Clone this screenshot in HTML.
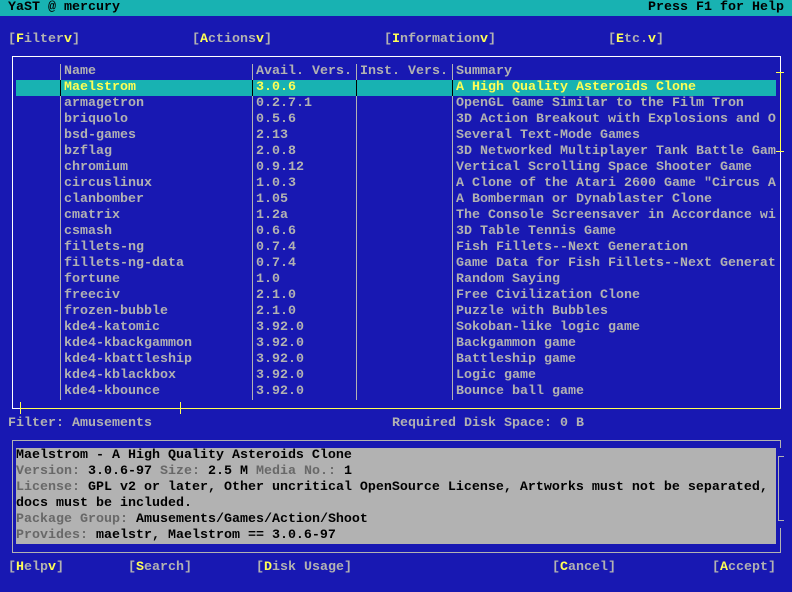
<!DOCTYPE html>
<html><head><meta charset="utf-8"><style>
*{margin:0;padding:0;box-sizing:border-box}
body{width:792px;height:592px;background:#1818b2;position:relative;overflow:hidden;font-family:"Liberation Mono",monospace;font-size:13.33px;line-height:16px;font-weight:bold;color:#b2b2b2}
.t{position:absolute;white-space:pre;height:16px}
.y{color:#ffff54}.k{color:#000}.d{color:#686868}
.l{position:absolute}
</style></head><body>
<div class="l" style="left:0;top:0;width:792px;height:16px;background:#18b2b2"></div>
<div class="t k" style="left:8px;top:0">YaST @ mercury</div>
<div class="t k" style="left:648px;top:0">Press F1 for Help</div>

<div class="t" style="left:8px;top:32px">[<span class="y">F</span>ilter<span class="y">v</span>]</div>
<div class="t" style="left:192px;top:32px">[<span class="y">A</span>ctions<span class="y">v</span>]</div>
<div class="t" style="left:384px;top:32px">[<span class="y">I</span>nformation<span class="y">v</span>]</div>
<div class="t" style="left:608px;top:32px">[<span class="y">E</span>tc.<span class="y">v</span>]</div>

<!-- list box -->
<div class="l" style="left:12px;top:56px;width:769px;height:1px;background:#fff"></div>
<div class="l" style="left:12px;top:56px;width:1px;height:353px;background:#fff"></div>
<div class="l" style="left:780px;top:56px;width:1px;height:16px;background:#fff"></div>
<div class="l" style="left:780px;top:152px;width:1px;height:257px;background:#fff"></div>
<div class="l" style="left:12px;top:408px;width:8px;height:1px;background:#fff"></div>
<div class="l" style="left:20px;top:408px;width:761px;height:1px;background:#ffff54"></div>
<div class="l" style="left:20px;top:402px;width:1px;height:12px;background:#ffff54"></div>
<div class="l" style="left:180px;top:402px;width:1px;height:12px;background:#ffff54"></div>
<div class="l" style="left:780px;top:72px;width:1px;height:80px;background:#ffff54"></div>
<div class="l" style="left:776px;top:72px;width:8px;height:1px;background:#ffff54"></div>
<div class="l" style="left:776px;top:151px;width:8px;height:1px;background:#ffff54"></div>

<div class="l" style="left:16px;top:80px;width:760px;height:16px;background:#18b2b2"></div>
<div class="l" style="left:60px;top:64px;width:1px;height:336px;background:#b2b2b2"></div>
<div class="l" style="left:252px;top:64px;width:1px;height:336px;background:#b2b2b2"></div>
<div class="l" style="left:356px;top:64px;width:1px;height:336px;background:#b2b2b2"></div>
<div class="l" style="left:452px;top:64px;width:1px;height:336px;background:#b2b2b2"></div>
<div class="l" style="left:60px;top:80px;width:1px;height:16px;background:#000"></div>
<div class="l" style="left:252px;top:80px;width:1px;height:16px;background:#000"></div>
<div class="l" style="left:356px;top:80px;width:1px;height:16px;background:#000"></div>
<div class="l" style="left:452px;top:80px;width:1px;height:16px;background:#000"></div>

<div class="t" style="left:64px;top:64px">Name</div>
<div class="t" style="left:256px;top:64px">Avail. Vers.</div>
<div class="t" style="left:360px;top:64px">Inst. Vers.</div>
<div class="t" style="left:456px;top:64px">Summary</div>

<div class="t" style="left:64px;top:80px;line-height:16px"><span class="y">Maelstrom</span>
armagetron
briquolo
bsd-games
bzflag
chromium
circuslinux
clanbomber
cmatrix
csmash
fillets-ng
fillets-ng-data
fortune
freeciv
frozen-bubble
kde4-katomic
kde4-kbackgammon
kde4-kbattleship
kde4-kblackbox
kde4-kbounce</div>
<div class="t" style="left:256px;top:80px"><span class="y">3.0.6</span>
0.2.7.1
0.5.6
2.13
2.0.8
0.9.12
1.0.3
1.05
1.2a
0.6.6
0.7.4
0.7.4
1.0
2.1.0
2.1.0
3.92.0
3.92.0
3.92.0
3.92.0
3.92.0</div>
<div class="t" style="left:456px;top:80px"><span class="y">A High Quality Asteroids Clone</span>
OpenGL Game Similar to the Film Tron
3D Action Breakout with Explosions and O
Several Text-Mode Games
3D Networked Multiplayer Tank Battle Gam
Vertical Scrolling Space Shooter Game
A Clone of the Atari 2600 Game "Circus A
A Bomberman or Dynablaster Clone
The Console Screensaver in Accordance wi
3D Table Tennis Game
Fish Fillets--Next Generation
Game Data for Fish Fillets--Next Generat
Random Saying
Free Civilization Clone
Puzzle with Bubbles
Sokoban-like logic game
Backgammon game
Battleship game
Logic game
Bounce ball game</div>

<div class="t" style="left:8px;top:416px">Filter: Amusements</div>
<div class="t" style="left:392px;top:416px">Required Disk Space: 0 B</div>

<!-- details -->
<div class="l" style="left:12px;top:440px;width:769px;height:1px;background:#b2b2b2"></div>
<div class="l" style="left:12px;top:440px;width:1px;height:113px;background:#b2b2b2"></div>
<div class="l" style="left:12px;top:552px;width:769px;height:1px;background:#b2b2b2"></div>
<div class="l" style="left:780px;top:440px;width:1px;height:8px;background:#b2b2b2"></div>
<div class="l" style="left:780px;top:528px;width:1px;height:25px;background:#b2b2b2"></div>
<div class="l" style="left:778px;top:456px;width:1px;height:65px;background:#b2b2b2"></div>
<div class="l" style="left:778px;top:456px;width:6px;height:1px;background:#b2b2b2"></div>
<div class="l" style="left:778px;top:520px;width:6px;height:1px;background:#b2b2b2"></div>
<div class="l" style="left:16px;top:448px;width:760px;height:96px;background:#b2b2b2"></div>
<div class="t k" style="left:16px;top:448px">Maelstrom - A High Quality Asteroids Clone
<span class="d">Version:</span> 3.0.6-97 <span class="d">Size:</span> 2.5 M <span class="d">Media No.:</span> 1
<span class="d">License:</span> GPL v2 or later, Other uncritical OpenSource License, Artworks must not be separated,
docs must be included.
<span class="d">Package Group:</span> Amusements/Games/Action/Shoot
<span class="d">Provides:</span> maelstr, Maelstrom == 3.0.6-97</div>

<div class="t" style="left:8px;top:560px">[<span class="y">H</span>elp<span class="y">v</span>]</div>
<div class="t" style="left:128px;top:560px">[<span class="y">S</span>earch]</div>
<div class="t" style="left:256px;top:560px">[<span class="y">D</span>isk Usage]</div>
<div class="t" style="left:552px;top:560px">[<span class="y">C</span>ancel]</div>
<div class="t" style="left:712px;top:560px">[<span class="y">A</span>ccept]</div>
</body></html>
